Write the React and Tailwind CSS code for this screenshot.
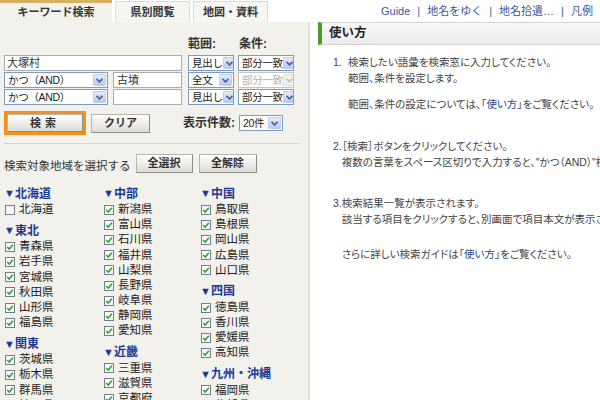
import React from 'react';

const regions = [
  [
    { name: '北海道', items: ['北海道'], off: true },
    { name: '東北', items: ['青森県', '岩手県', '宮城県', '秋田県', '山形県', '福島県'] },
    { name: '関東', items: ['茨城県', '栃木県', '群馬県', '埼玉県', '千葉県'] },
  ],
  [
    { name: '中部', items: ['新潟県', '富山県', '石川県', '福井県', '山梨県', '長野県', '岐阜県', '静岡県', '愛知県'] },
    { name: '近畿', items: ['三重県', '滋賀県', '京都府', '大阪府'] },
  ],
  [
    { name: '中国', items: ['鳥取県', '島根県', '岡山県', '広島県', '山口県'] },
    { name: '四国', items: ['徳島県', '香川県', '愛媛県', '高知県'] },
    { name: '九州・沖縄', items: ['福岡県', '佐賀県'] },
  ],
];

function Select({ className, text, disabled }) {
  return (
    <div className={`flex h-[16px] items-center justify-between overflow-hidden border bg-white pl-[3px] pr-[1px] ${disabled ? 'border-[#c9c7ba]' : 'border-[#7f9db9]'} ${className}`}>
      <span className={`whitespace-nowrap text-[10.5px] leading-none tracking-[-0.3px] ${disabled ? 'text-[#b0b0b0]' : 'text-[#222]'}`}>{text}</span>
      <span className={`flex h-[12px] w-[13px] shrink-0 items-center justify-center rounded-[1px] border ${disabled ? 'border-[#e0e0da] bg-[#f0f0ec]' : 'border-[#bccdf5] bg-gradient-to-b from-[#e2eafc] to-[#b7cbf6]'}`}>
        <svg width="7" height="5" viewBox="0 0 7 5">
          <path d="M0.5 0.8 L3.5 3.8 L6.5 0.8" fill="none" stroke={disabled ? '#c6c6c0' : '#4d6185'} strokeWidth="1.6" />
        </svg>
      </span>
    </div>
  );
}

function Button({ className, children }) {
  return (
    <div className={`flex items-center justify-center border border-[#b5b5b0] border-b-[#8d8d88] border-r-[#8d8d88] bg-gradient-to-b from-[#ffffff] to-[#dedcd6] text-[11px] font-bold text-[#333] ${className}`}>
      {children}
    </div>
  );
}

function Check({ on }) {
  return (
    <svg width="10" height="10" viewBox="0 0 10 10" className="shrink-0">
      <rect x="0.5" y="0.5" width="9" height="9" fill="#fafafa" stroke="#6f7f8f" />
      {on && <path d="M2.2 5 L4.2 7 L7.9 2.8" fill="none" stroke="#2ea12e" strokeWidth="1.6" />}
    </svg>
  );
}

export default function App() {
  return (
    <div className="flex h-[400px] w-[600px] overflow-hidden bg-white font-['Liberation_Sans','Noto_Sans_CJK_JP',sans-serif] text-[#333]">
      {/* left: search panel */}
      <div className="flex w-[310px] shrink-0 flex-col">
        <div className="flex h-[22px] items-end gap-[3px]">
          <div className="flex h-[22px] w-[112px] items-center justify-center border-t-[3px] border-[#d4b262] bg-[#f2f1ec] text-[11px] font-bold">キーワード検索</div>
          <div className="flex h-[21px] w-[75px] items-center justify-center border border-b-0 border-[#dcdbd4] bg-[#f6f5f1] text-[11px] font-bold">県別閲覧</div>
          <div className="flex h-[21px] w-[75px] items-center justify-center border border-b-0 border-[#dcdbd4] bg-[#f6f5f1] text-[11px] font-bold">地図・資料</div>
        </div>
        <div className="flex-1 border-r-2 border-[#e2e1db] bg-[#f2f1ec] pl-[4px] pr-[8px] pt-[14px]">
          <div className="mb-[3px] flex h-[16px] items-center text-[12px] font-bold">
            <span className="ml-[184px]">範囲:</span>
            <span className="ml-[23px]">条件:</span>
          </div>
          <div className="flex flex-col gap-[1px]">
            <div className="flex">
              <div className="flex h-[16px] w-[178px] items-center border border-[#a5acb2] bg-white pl-[2px] text-[11px]">大塚村</div>
              <Select className="ml-[6px] w-[46px]" text="見出し" />
              <Select className="ml-[4px] w-[56px]" text="部分一致" />
            </div>
            <div className="flex">
              <Select className="w-[104px]" text="かつ（AND）" />
              <div className="ml-[5px] flex h-[16px] w-[69px] items-center border border-[#a5acb2] bg-white pl-[3px] text-[11px]">古墳</div>
              <Select className="ml-[6px] w-[46px]" text="全文" />
              <Select className="ml-[4px] w-[56px]" text="部分一致" disabled />
            </div>
            <div className="flex">
              <Select className="w-[104px]" text="かつ（AND）" />
              <div className="ml-[5px] h-[16px] w-[69px] border border-[#a5acb2] bg-white" />
              <Select className="ml-[6px] w-[46px]" text="見出し" />
              <Select className="ml-[4px] w-[56px]" text="部分一致" />
            </div>
          </div>
          <div className="mt-[6px] flex items-center">
            <div className="border-[3px] border-[#f5901e]">
              <Button className="h-[18px] w-[76px] tracking-[4px]">検索</Button>
            </div>
            <Button className="ml-[5px] h-[19px] w-[59px]">クリア</Button>
            <span className="ml-[33px] text-[12px] font-bold">表示件数:</span>
            <Select className="ml-[4px] w-[44px]" text="20件" />
          </div>
          <div className="mt-[8px] h-px bg-[#d6d5ce]" />
          <div className="mt-[10px] flex items-end">
            <span className="mb-[-1px] text-[11.5px] leading-[16px]">検索対象地域を選択する</span>
            <Button className="ml-[5px] h-[19px] w-[57px]">全選択</Button>
            <Button className="ml-[6px] h-[19px] w-[58px]">全解除</Button>
          </div>
          <div className="mt-[12px] flex">
            {regions.map((col, i) => (
              <div key={i} className={i === 0 ? 'w-[99px]' : i === 1 ? 'w-[97px]' : 'w-[100px]'}>
                {col.map((g) => (
                  <div key={g.name} className="mb-[5px]">
                    <div className="flex h-[17px] items-center text-[12px] font-bold text-[#1b3a96]">
                      <span className="text-[11px]">▼</span>
                      <span>{g.name}</span>
                    </div>
                    {g.items.map((p) => (
                      <div key={p} className="flex h-[15.2px] items-center gap-[4px] pl-[1px] text-[11.5px] text-[#222]">
                        <Check on={!g.off} />
                        <span>{p}</span>
                      </div>
                    ))}
                  </div>
                ))}
              </div>
            ))}
          </div>
        </div>
      </div>

      {/* right: usage guide */}
      <div className="flex min-w-0 flex-1 flex-col">
        <div className="flex h-[22px] items-center whitespace-nowrap pl-[71px] text-[11px] text-[#37579a]">
          <span>Guide</span>
          <span className="mx-[7px]">|</span>
          <span>地名をゆく</span>
          <span className="mx-[7px]">|</span>
          <span>地名拾遺…</span>
          <span className="mx-[7px]">|</span>
          <span>凡例</span>
          <span className="mx-[7px]">|</span>
          <span>ヘルプ</span>
        </div>
        <div className="ml-[8px] flex h-[23px] items-center border-y border-l-4 border-[#d2d2d2] border-l-[#4a9a2c] bg-gradient-to-b from-[#f8f8f8] to-[#ececec] pl-[7px] text-[12.5px] font-bold text-[#222]">
          使い方
        </div>
        <div className="whitespace-nowrap pl-[23px] pt-[9px] text-[10.5px] leading-[16px] text-[#444] [font-feature-settings:'palt']">
          <div className="flex">
            <span className="w-[15px]">1.</span>
            <div>
              <div>検索したい語彙を検索窓に入力してください。</div>
              <div>範囲、条件を設定します。</div>
              <div className="mt-[10px]">範囲、条件の設定については、「<span className="text-[#24479a]">使い方</span>」をご覧ください。</div>
            </div>
          </div>
          <div className="mt-[26px] flex">
            <span className="w-[15px]">2.</span>
            <div>
              <div>［検索］ボタンをクリックしてください。</div>
              <div>複数の言葉をスペース区切りで入力すると、"かつ（AND）"検索になります。</div>
            </div>
          </div>
          <div className="mt-[25px] flex">
            <span className="w-[15px]">3.</span>
            <div>
              <div>検索結果一覧が表示されます。</div>
              <div>該当する項目をクリックすると、別画面で項目本文が表示されます。</div>
              <div className="mt-[19px]">さらに詳しい検索ガイドは「<span className="text-[#24479a]">使い方</span>」をご覧ください。</div>
            </div>
          </div>
        </div>
      </div>
    </div>
  );
}
